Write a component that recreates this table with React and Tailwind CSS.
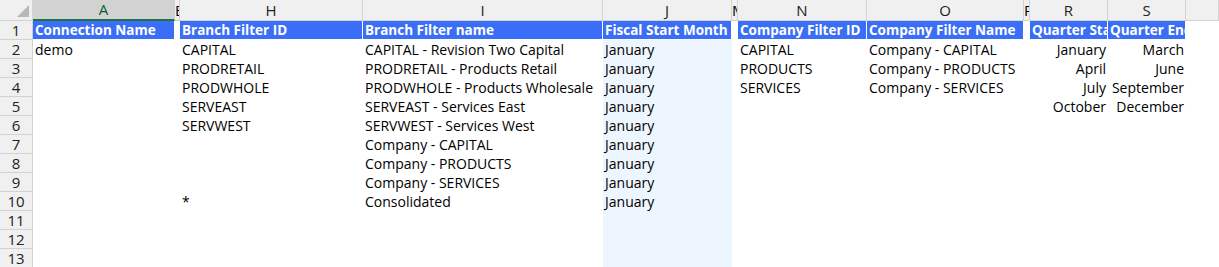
const cols = [
  { l: "A", w: "w-[142px]", sel: true },
  { l: "B", w: "w-[5px]", narrow: true },
  { l: "H", w: "w-[183px]" },
  { l: "I", w: "w-[240px]" },
  { l: "J", w: "w-[129px]", fill: true },
  { l: "M", w: "w-[6px]", narrow: true },
  { l: "N", w: "w-[129px]" },
  { l: "O", w: "w-[157px]" },
  { l: "P", w: "w-[6px]", narrow: true },
  { l: "R", w: "w-[78px]", right: true },
  { l: "S", w: "w-[78px]", right: true },
  { l: "", w: "flex-1" },
];

const header = [
  "Connection Name", "", "Branch Filter ID", "Branch Filter name", "Fiscal Start Month", "",
  "Company Filter ID", "Company Filter Name", "", "Quarter Start Month", "Quarter End Month", "",
];

const rows = [
  ["demo", "", "CAPITAL", "CAPITAL - Revision Two Capital", "January", "", "CAPITAL", "Company - CAPITAL", "", "January", "March", ""],
  ["", "", "PRODRETAIL", "PRODRETAIL - Products Retail", "January", "", "PRODUCTS", "Company - PRODUCTS", "", "April", "June", ""],
  ["", "", "PRODWHOLE", "PRODWHOLE - Products Wholesale", "January", "", "SERVICES", "Company - SERVICES", "", "July", "September", ""],
  ["", "", "SERVEAST", "SERVEAST - Services East", "January", "", "", "", "", "October", "December", ""],
  ["", "", "SERVWEST", "SERVWEST - Services West", "January", "", "", "", "", "", "", ""],
  ["", "", "", "Company - CAPITAL", "January", "", "", "", "", "", "", ""],
  ["", "", "", "Company - PRODUCTS", "January", "", "", "", "", "", "", ""],
  ["", "", "", "Company - SERVICES", "January", "", "", "", "", "", "", ""],
  ["", "", "*", "Consolidated", "January", "", "", "", "", "", "", ""],
  ["", "", "", "", "", "", "", "", "", "", "", ""],
  ["", "", "", "", "", "", "", "", "", "", "", ""],
  ["", "", "", "", "", "", "", "", "", "", "", ""],
];

function RowHead({ n }) {
  return (
    <div className="w-[33px] shrink-0 h-[19px] bg-[#f0f0f0] border-r border-b border-[#d2d2d2] flex items-center justify-center text-[15px] text-[#222]">
      {n}
    </div>
  );
}

export default function App() {
  return (
    <div
      className="w-[1219px] h-[267px] overflow-hidden bg-white text-[14px] text-black"
      style={{ fontFamily: '"Open Sans", "Liberation Sans", sans-serif' }}
    >
      <div className="flex h-[21px]">
        <div className="w-[33px] shrink-0 bg-[#f0f0f0] border-r border-b border-[#d2d2d2] relative">
          <div className="absolute right-[3px] bottom-[3px] w-0 h-0 border-l-[12px] border-l-transparent border-b-[12px] border-b-[#b8b8b8]" />
        </div>
        {cols.map((c, i) => (
          <div
            key={i}
            className={
              c.w +
              " shrink-0 overflow-hidden whitespace-nowrap flex items-center text-[15px] border-r border-[#d2d2d2] " +
              (c.sel
                ? "bg-[#d2d2d2] text-[#0e5c2f] border-b-2 border-b-[#217346] justify-center"
                : c.narrow
                ? "bg-[#f0f0f0] border-b border-b-[#d2d2d2] justify-start"
                : "bg-[#f0f0f0] border-b border-b-[#d2d2d2] justify-center text-[#222]")
            }
          >
            {c.l}
          </div>
        ))}
      </div>

      <div className="flex h-[19px]">
        <RowHead n={1} />
        {cols.map((c, i) => (
          <div
            key={i}
            className={
              c.w +
              " shrink-0 overflow-hidden whitespace-nowrap flex items-center pl-[2px] text-[13.5px] font-bold border-r border-b border-white " +
              (c.narrow || c.l === "" ? "bg-white" : "bg-[#3b6ef6] text-white")
            }
          >
            {header[i]}
          </div>
        ))}
      </div>

      {rows.map((r, ri) => (
        <div key={ri} className="flex h-[19px]">
          <RowHead n={ri + 2} />
          {cols.map((c, i) => (
            <div
              key={i}
              className={
                c.w +
                " shrink-0 overflow-hidden whitespace-nowrap flex items-center px-[2px] " +
                (c.right ? "justify-end " : "") +
                (c.fill ? "bg-[#edf5fe]" : "bg-white")
              }
            >
              {r[i]}
            </div>
          ))}
        </div>
      ))}
    </div>
  );
}
